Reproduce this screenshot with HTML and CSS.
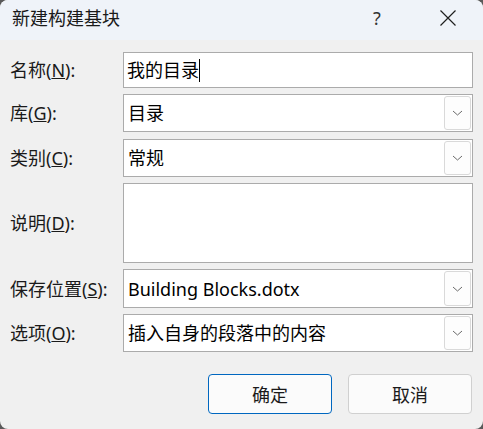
FILE: index.html
```html
<!DOCTYPE html>
<html lang="zh-CN">
<head>
    <meta charset="UTF-8">
    <title>新建构建基块</title>
    <link rel="stylesheet" href="styles.css">
</head>
<body>
    <div class="dialog">
        <!-- Barra de título -->
        <div class="title-bar">
            <span class="title">新建构建基块</span>
            <span class="help">?</span>
            <span class="close">
                <svg width="16" height="16" viewBox="0 0 16 16"><path d="M0.5 0.5 L15.5 15.5 M15.5 0.5 L0.5 15.5" stroke="#1f1f1f" stroke-width="1.2" fill="none"/></svg>
            </span>
        </div>

        <!-- Formulario -->
        <div class="form">
            <div class="row row-name">
                <label class="label">名称(<u>N</u>):</label>
                <div class="field">我的目录<span class="caret"></span></div>
            </div>
            <div class="row row-lib">
                <label class="label">库(<u>G</u>):</label>
                <div class="field combo">目录<span class="drop"><svg width="11" height="6" viewBox="0 0 11 6"><path d="M1 1 L5.5 5 L10 1" stroke="#6a6a6a" stroke-width="1" fill="none"/></svg></span></div>
            </div>
            <div class="row row-cat">
                <label class="label">类别(<u>C</u>):</label>
                <div class="field combo">常规<span class="drop"><svg width="11" height="6" viewBox="0 0 11 6"><path d="M1 1 L5.5 5 L10 1" stroke="#6a6a6a" stroke-width="1" fill="none"/></svg></span></div>
            </div>
            <div class="row row-desc">
                <label class="label">说明(<u>D</u>):</label>
                <div class="field"></div>
            </div>
            <div class="row row-save">
                <label class="label">保存位置(<u>S</u>):</label>
                <div class="field combo">Building Blocks.dotx<span class="drop"><svg width="11" height="6" viewBox="0 0 11 6"><path d="M1 1 L5.5 5 L10 1" stroke="#6a6a6a" stroke-width="1" fill="none"/></svg></span></div>
            </div>
            <div class="row row-opt">
                <label class="label">选项(<u>O</u>):</label>
                <div class="field combo">插入自身的段落中的内容<span class="drop"><svg width="11" height="6" viewBox="0 0 11 6"><path d="M1 1 L5.5 5 L10 1" stroke="#6a6a6a" stroke-width="1" fill="none"/></svg></span></div>
            </div>
        </div>

        <!-- Botones -->
        <div class="buttons">
            <button class="btn btn-primary">确定</button>
            <button class="btn">取消</button>
        </div>
    </div>
</body>
</html>
```

FILE: styles.css
```css
/* Estilos del diálogo */
html, body {
    margin: 0;
    padding: 0;
    background-color: #5a5a5a;
}

body {
    font-family: "Noto Sans", "Noto Sans CJK SC", sans-serif;
    font-size: 18px;
    color: #000;
}

.dialog {
    width: 483px;
    height: 429px;
    background-color: #f0f0f0;
    border-radius: 8px;
    overflow: hidden;
    display: flex;
    flex-direction: column;
}

.title-bar {
    height: 36px;
    padding-bottom: 4px;
    background-color: #eff3f9;
    display: flex;
    align-items: center;
    padding-left: 12px;
}

.title {
    flex-grow: 1;
    line-height: 1;
    color: #1a1a1a;
}

.help {
    width: 20px;
    margin-right: 53px;
    text-align: center;
    font-family: "Noto Sans", sans-serif;
    font-size: 18px;
    line-height: 1;
    color: #333;
}

.close {
    width: 16px;
    height: 16px;
    margin-right: 27px;
    display: flex;
}

.form {
    padding: 12px 10px 0 10px;
    display: flex;
    flex-direction: column;
    gap: 6px;
}

.row {
    display: flex;
    align-items: center;
}

.row-name { height: 36px; }
.row-lib { height: 38px; }
.row-cat { height: 38px; margin-top: 1px; }
.row-desc { height: 80px; }
.row-save { height: 39px; }
.row-opt { height: 38px; }

.label {
    width: 113px;
    line-height: 1;
    color: #1a1a1a;
}

.field {
    flex-grow: 1;
    align-self: stretch;
    box-sizing: border-box;
    background-color: #fff;
    border: 1px solid #ababab;
    display: flex;
    align-items: center;
    padding-left: 3px;
    line-height: 1;
    position: relative;
}

.combo {
    padding-left: 4px;
}

.caret {
    width: 1px;
    height: 23px;
    background-color: #000;
    margin-left: 0;
}

.drop {
    position: absolute;
    right: 1px;
    top: 1px;
    bottom: 1px;
    width: 27px;
    box-sizing: border-box;
    border: 1px solid #d9d9d9;
    border-radius: 3px;
    background-color: #fdfdfd;
    display: flex;
    align-items: center;
    justify-content: center;
}

.buttons {
    display: flex;
    justify-content: flex-end;
    gap: 16px;
    padding: 22px 11px 0 0;
}

.btn {
    width: 124px;
    height: 40px;
    box-sizing: border-box;
    background-color: #fbfbfb;
    border: 1px solid #d0d0d0;
    border-radius: 4px;
    font-family: "Noto Sans CJK SC", sans-serif;
    font-size: 18px;
    color: #1a1a1a;
    padding: 0;
}

.btn-primary {
    border-color: #0067c0;
}
```
